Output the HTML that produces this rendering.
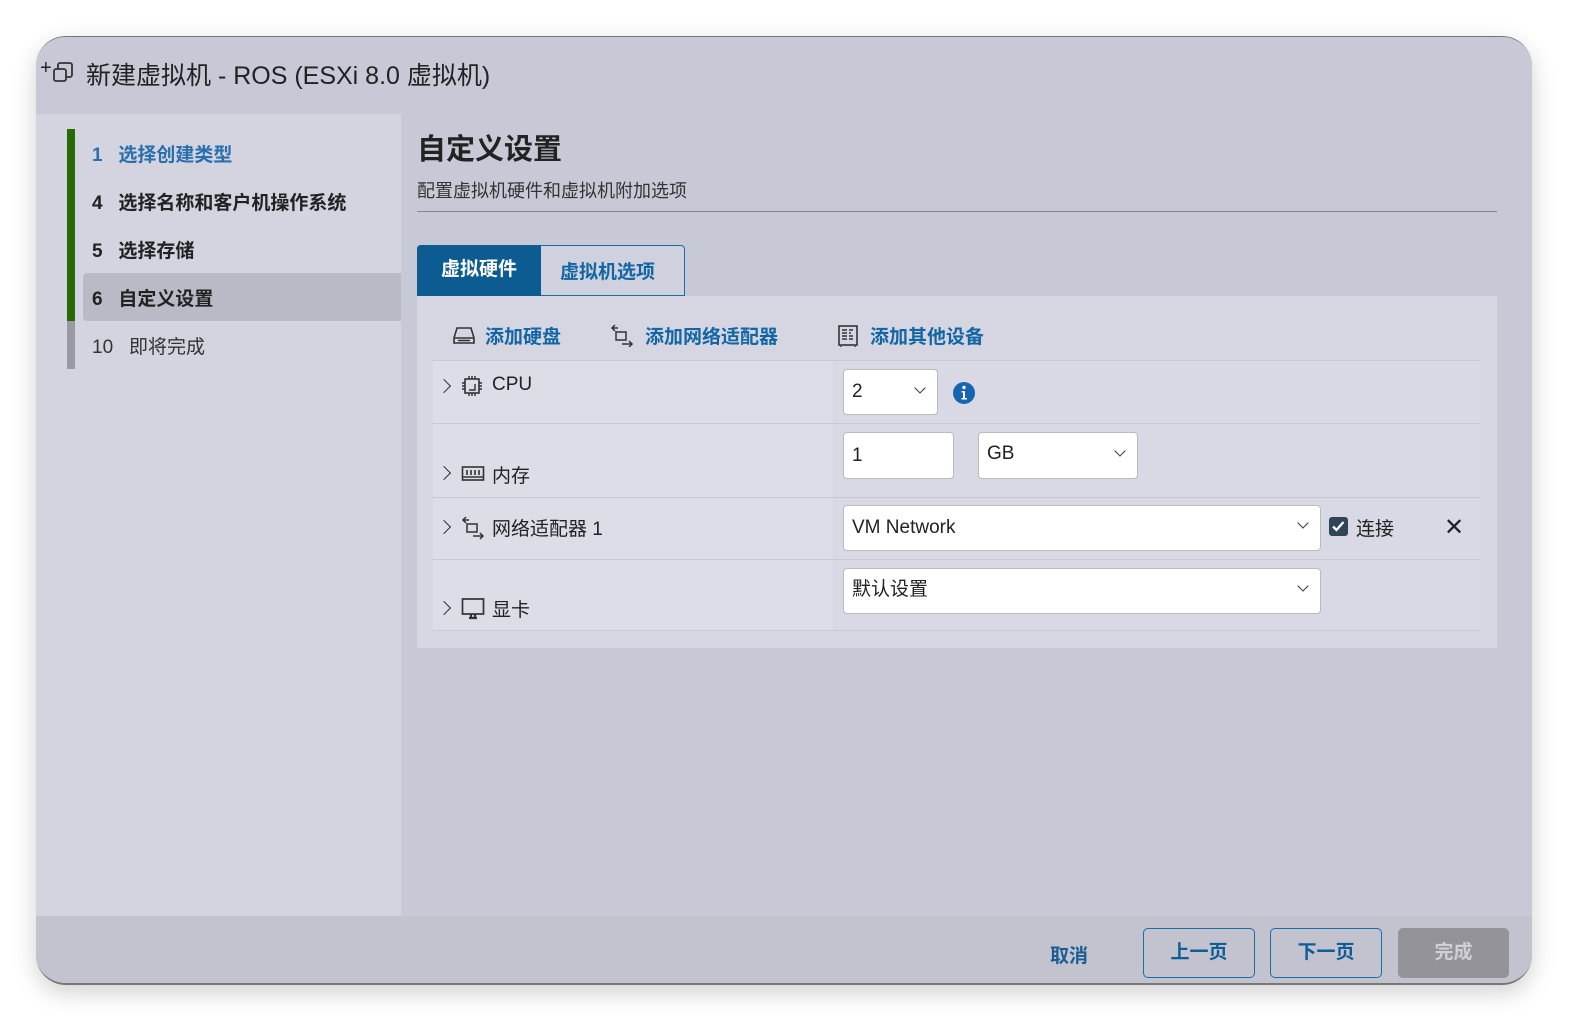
<!DOCTYPE html>
<html><head><meta charset="utf-8"><style>
*{box-sizing:border-box;margin:0;padding:0}
body{width:1578px;height:1028px;background:#fff;font-family:"Liberation Sans","Noto Sans CJK SC",sans-serif;position:relative;overflow:hidden;color:#222}
.win{position:absolute;left:36px;top:36px;width:1496px;height:949px;border-radius:30px;background:#c8c9d7;overflow:hidden;box-shadow:0 8px 24px rgba(0,0,0,.18);border-top:1px solid #777;border-bottom:2px solid #777}
.a{position:absolute}
.hdr{left:0;top:0;width:1496px;height:77px;background:#c8c9d6}
.side{left:0;top:77px;width:365px;height:802px;background:#d3d4e0}
.foot{left:0;top:879px;width:1496px;height:70px;background:#c3c3d0}
.nav{font-size:19px;font-weight:bold;color:#222}
.bar{left:31px;width:8px}
.panel{left:381px;top:259px;width:1080px;height:352px;background:#d5d6e2}
.row{left:397px;width:1047px;background:#d8d9e4;border-top:1px solid #c8c9d4}
.lc{position:absolute;left:0;top:0;width:400px;height:100%;background:#dcdde7}
.inp{position:absolute;background:#fff;border:1px solid #bbb;border-radius:4px;font-size:19px;padding-left:8px;color:#222}
.chev{position:absolute;width:8px;height:8px;border-right:1.5px solid #333;border-bottom:1.5px solid #333;transform:rotate(45deg)}
.rchev{position:absolute;width:10px;height:10px;border-right:1.8px solid #333;border-top:1.8px solid #333;transform:rotate(45deg)}
.lbl{position:absolute;font-size:19px;color:#222}
.blue{color:#1366a4;font-weight:bold;font-size:19px}
.btn{position:absolute;top:891px;height:50px;border:1.5px solid #1a6ea8;border-radius:5px;color:#0f5d96;font-weight:bold;font-size:19px;text-align:center;line-height:47px}
</style></head><body>
<div class="win">
<div class="a hdr"></div>
<div class="a side"></div>
<div class="a foot"></div>
<div class="a" style="left:4px;top:20px;font-size:20px">+</div>
<svg class="a" style="left:16px;top:24px" width="22" height="24" viewBox="0 0 22 24"><rect x="6" y="2" width="14" height="14" rx="2" fill="none" stroke="#333" stroke-width="1.8"/><rect x="2" y="8" width="12" height="12" rx="2" fill="#c8c9d6" stroke="#333" stroke-width="1.8"/></svg>
<div class="a" style="left:50px;top:19px;font-size:25px;color:#222">新建虚拟机 - ROS (ESXi 8.0 虚拟机)</div>

<div class="a bar" style="top:92px;height:192px;background:#2a6a06"></div>
<div class="a bar" style="top:284px;height:48px;background:#9a9aa2"></div>
<div class="a" style="left:47px;top:236px;width:318px;height:48px;background:#b9bac6;border-radius:4px 0 0 4px"></div>
<div class="a nav" style="left:56px;top:103px;color:#2a6fae">1&nbsp;&nbsp;&nbsp;选择创建类型</div>
<div class="a nav" style="left:56px;top:151px">4&nbsp;&nbsp;&nbsp;选择名称和客户机操作系统</div>
<div class="a nav" style="left:56px;top:199px">5&nbsp;&nbsp;&nbsp;选择存储</div>
<div class="a nav" style="left:56px;top:247px">6&nbsp;&nbsp;&nbsp;自定义设置</div>
<div class="a" style="left:56px;top:295px;font-size:19px;color:#333">10&nbsp;&nbsp;&nbsp;即将完成</div>

<div class="a" style="left:381px;top:89px;font-size:29px;font-weight:bold;color:#222">自定义设置</div>
<div class="a" style="left:381px;top:140px;font-size:18px;color:#333">配置虚拟机硬件和虚拟机附加选项</div>
<div class="a" style="left:381px;top:174px;width:1080px;height:1px;background:#888"></div>

<div class="a" style="left:381px;top:208px;width:268px;height:51px;border:1.5px solid #1a6ea8;border-radius:4px 4px 0 0;background:#d0d1de"></div>
<div class="a" style="left:381px;top:208px;width:124px;height:51px;background:#0c5c92;border-radius:4px 0 0 0;color:#fff;font-weight:bold;font-size:19px;text-align:center;line-height:50px">虚拟硬件</div>
<div class="a blue" style="left:524px;top:220px">虚拟机选项</div>

<div class="a panel"></div>
<svg class="a" style="left:415px;top:288px" width="26" height="20" viewBox="0 0 26 20"><path d="M3 13 L6 3 H20 L23 13 V18 H3 Z M3 13 H23 M7 15.5 H19" fill="none" stroke="#333" stroke-width="1.6"/></svg>
<div class="a blue" style="left:449px;top:285px">添加硬盘</div>
<svg class="a" style="left:574px;top:286px" width="24" height="24" viewBox="0 0 24 24"><path d="M5 2 L2 5 L5 8 M2 5 H8 M6 9 H16 V17 H6 Z M12 21 H22 M19 18 L22 21 L19 24" fill="none" stroke="#333" stroke-width="1.5"/></svg>
<div class="a blue" style="left:609px;top:285px">添加网络适配器</div>
<svg class="a" style="left:801px;top:287px" width="22" height="24" viewBox="0 0 22 24"><rect x="2" y="2" width="18" height="19" fill="none" stroke="#333" stroke-width="1.6"/><path d="M5 6h5M5 9h5M5 12h5M5 15h5M12 6h4M12 9h2M12 12h4M12 15h4M4 22v1M18 22v1" stroke="#333" stroke-width="1.4"/></svg>
<div class="a blue" style="left:834px;top:285px">添加其他设备</div>

<div class="a row" style="top:323px;height:63px"><div class="lc"></div></div>
<div class="a row" style="top:386px;height:74px"><div class="lc"></div></div>
<div class="a row" style="top:460px;height:62px"><div class="lc"></div></div>
<div class="a row" style="top:522px;height:72px;border-bottom:1px solid #c8c9d4"><div class="lc"></div></div>

<div class="rchev" style="left:403px;top:344px"></div>
<svg class="a" style="left:425px;top:338px" width="22" height="22" viewBox="0 0 22 22"><rect x="4" y="4" width="14" height="14" fill="none" stroke="#333" stroke-width="1.6"/><path d="M8 1v3M11 1v3M14 1v3M8 18v3M11 18v3M14 18v3M1 8h3M1 11h3M1 14h3M18 8h3M18 11h3M18 14h3M8 15h6V9" stroke="#333" stroke-width="1.4" fill="none"/></svg>
<div class="lbl" style="left:456px;top:337px">CPU</div>
<div class="inp" style="left:807px;top:332px;width:95px;height:46px;line-height:44px">2</div>
<div class="chev" style="left:880px;top:347px"></div>
<svg class="a" style="left:916px;top:344px" width="24" height="24" viewBox="0 0 24 24"><circle cx="12" cy="12" r="11" fill="#1565b0"/><circle cx="12" cy="6.5" r="1.7" fill="#fff"/><path d="M9.5 10h3.5v7h2v1.5H9.5V17h1.5v-5.5h-1.5z" fill="#fff"/></svg>

<div class="rchev" style="left:403px;top:431px"></div>
<svg class="a" style="left:425px;top:428px" width="24" height="18" viewBox="0 0 24 18"><rect x="1.5" y="2" width="21" height="13" fill="none" stroke="#333" stroke-width="1.6"/><path d="M6 5v5M10 5v5M14 5v5M18 5v5M1.5 12h21" stroke="#333" stroke-width="1.6"/></svg>
<div class="lbl" style="left:456px;top:424px">内存</div>
<div class="inp" style="left:807px;top:395px;width:111px;height:47px;line-height:45px">1</div>
<div class="inp" style="left:942px;top:395px;width:160px;height:47px;line-height:42px">GB</div>
<div class="chev" style="left:1080px;top:410px"></div>

<div class="rchev" style="left:403px;top:485px"></div>
<svg class="a" style="left:425px;top:478px" width="24" height="26" viewBox="0 0 24 26"><path d="M5 2 L2 5 L5 8 M2 5 H8 M6 9 H16 V17 H6 Z M12 21 H22 M19 18 L22 21 L19 24" fill="none" stroke="#333" stroke-width="1.5"/></svg>
<div class="lbl" style="left:456px;top:477px">网络适配器 1</div>
<div class="inp" style="left:807px;top:468px;width:478px;height:46px;line-height:44px">VM Network</div>
<div class="chev" style="left:1263px;top:482px"></div>
<svg class="a" style="left:1293px;top:480px" width="19" height="19" viewBox="0 0 19 19"><rect width="19" height="19" rx="3" fill="#2d4556"/><path d="M4 9.5l3.5 3.5 7-8" fill="none" stroke="#fff" stroke-width="2.3"/></svg>
<div class="lbl" style="left:1320px;top:477px">连接</div>
<div class="a" style="left:1408px;top:476px;font-size:24px;color:#222">✕</div>

<div class="rchev" style="left:403px;top:566px"></div>
<svg class="a" style="left:425px;top:560px" width="24" height="24" viewBox="0 0 24 24"><rect x="1.5" y="2" width="21" height="15" fill="none" stroke="#333" stroke-width="1.7"/><path d="M8 21h8M10 17v3M14 17v3" stroke="#333" stroke-width="2.2"/></svg>
<div class="lbl" style="left:456px;top:558px">显卡</div>
<div class="inp" style="left:807px;top:531px;width:478px;height:46px;line-height:42px">默认设置</div>
<div class="chev" style="left:1263px;top:545px"></div>

<div class="a" style="left:1014px;top:904px;color:#1a5d92;font-weight:bold;font-size:19px">取消</div>
<div class="btn" style="left:1107px;width:112px">上一页</div>
<div class="btn" style="left:1234px;width:112px">下一页</div>
<div class="a" style="left:1362px;top:891px;width:111px;height:50px;background:#939399;border-radius:5px;color:#cfcfd4;font-weight:bold;font-size:19px;text-align:center;line-height:50px">完成</div>
</div>
</body></html>
